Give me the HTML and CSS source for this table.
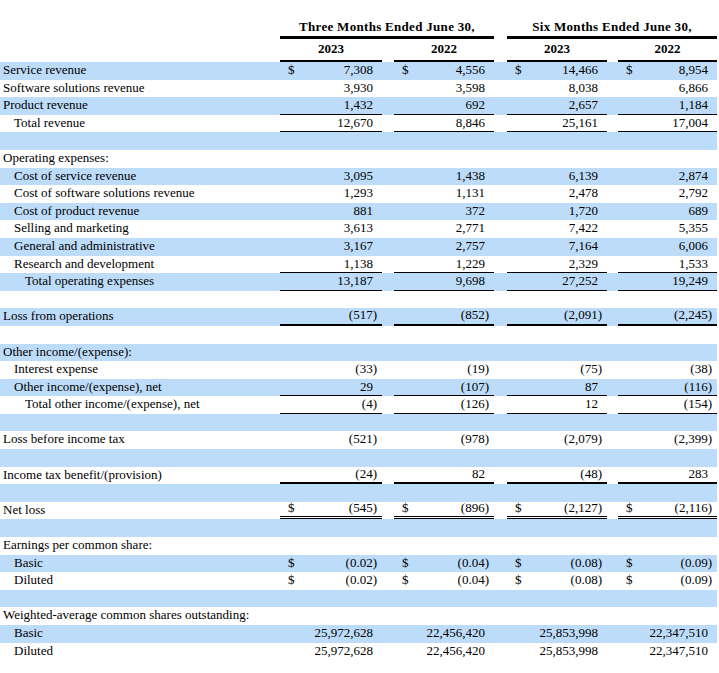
FILE: index.html
```html
<!DOCTYPE html>
<html lang="en">
<head>
<meta charset="utf-8">
<title>Statements of Operations</title>
<link rel="stylesheet" href="styles.css">
</head>
<body>
<div class="sheet">
  <div class="grid head1">
    <div class="grp g1">Three Months Ended June 30,</div>
    <div class="grp g2">Six Months Ended June 30,</div>
  </div>
  <div class="grid head2">
    <div class="yr c1">2023</div>
    <div class="yr c2">2022</div>
    <div class="yr c3">2023</div>
    <div class="yr c4">2022</div>
  </div>

  <div class="grid row b">
    <div class="lbl">Service revenue</div>
    <div class="v c1"><span>$</span><span>7,308</span></div>
    <div class="v c2"><span>$</span><span>4,556</span></div>
    <div class="v c3"><span>$</span><span>14,466</span></div>
    <div class="v c4"><span>$</span><span>8,954</span></div>
  </div>
  <div class="grid row">
    <div class="lbl">Software solutions revenue</div>
    <div class="v c1"><span>3,930</span></div>
    <div class="v c2"><span>3,598</span></div>
    <div class="v c3"><span>8,038</span></div>
    <div class="v c4"><span>6,866</span></div>
  </div>
  <div class="grid row b">
    <div class="lbl">Product revenue</div>
    <div class="v c1 u1"><span>1,432</span></div>
    <div class="v c2 u1"><span>692</span></div>
    <div class="v c3 u1"><span>2,657</span></div>
    <div class="v c4 u1"><span>1,184</span></div>
  </div>
  <div class="grid row">
    <div class="lbl i1">Total revenue</div>
    <div class="v c1 u1"><span>12,670</span></div>
    <div class="v c2 u1"><span>8,846</span></div>
    <div class="v c3 u1"><span>25,161</span></div>
    <div class="v c4 u1"><span>17,004</span></div>
  </div>
  <div class="grid row b"></div>
  <div class="grid row">
    <div class="lbl">Operating expenses:</div>
  </div>
  <div class="grid row b">
    <div class="lbl i1">Cost of service revenue</div>
    <div class="v c1"><span>3,095</span></div>
    <div class="v c2"><span>1,438</span></div>
    <div class="v c3"><span>6,139</span></div>
    <div class="v c4"><span>2,874</span></div>
  </div>
  <div class="grid row">
    <div class="lbl i1">Cost of software solutions revenue</div>
    <div class="v c1"><span>1,293</span></div>
    <div class="v c2"><span>1,131</span></div>
    <div class="v c3"><span>2,478</span></div>
    <div class="v c4"><span>2,792</span></div>
  </div>
  <div class="grid row b">
    <div class="lbl i1">Cost of product revenue</div>
    <div class="v c1"><span>881</span></div>
    <div class="v c2"><span>372</span></div>
    <div class="v c3"><span>1,720</span></div>
    <div class="v c4"><span>689</span></div>
  </div>
  <div class="grid row">
    <div class="lbl i1">Selling and marketing</div>
    <div class="v c1"><span>3,613</span></div>
    <div class="v c2"><span>2,771</span></div>
    <div class="v c3"><span>7,422</span></div>
    <div class="v c4"><span>5,355</span></div>
  </div>
  <div class="grid row b">
    <div class="lbl i1">General and administrative</div>
    <div class="v c1"><span>3,167</span></div>
    <div class="v c2"><span>2,757</span></div>
    <div class="v c3"><span>7,164</span></div>
    <div class="v c4"><span>6,006</span></div>
  </div>
  <div class="grid row">
    <div class="lbl i1">Research and development</div>
    <div class="v c1 u1"><span>1,138</span></div>
    <div class="v c2 u1"><span>1,229</span></div>
    <div class="v c3 u1"><span>2,329</span></div>
    <div class="v c4 u1"><span>1,533</span></div>
  </div>
  <div class="grid row b">
    <div class="lbl i2">Total operating expenses</div>
    <div class="v c1 u1"><span>13,187</span></div>
    <div class="v c2 u1"><span>9,698</span></div>
    <div class="v c3 u1"><span>27,252</span></div>
    <div class="v c4 u1"><span>19,249</span></div>
  </div>
  <div class="grid row"></div>
  <div class="grid row b">
    <div class="lbl">Loss from operations</div>
    <div class="v c1 n u2"><span>(517)</span></div>
    <div class="v c2 n u2"><span>(852)</span></div>
    <div class="v c3 n u2"><span>(2,091)</span></div>
    <div class="v c4 n u2"><span>(2,245)</span></div>
  </div>
  <div class="grid row"></div>
  <div class="grid row b">
    <div class="lbl">Other income/(expense):</div>
  </div>
  <div class="grid row">
    <div class="lbl i1">Interest expense</div>
    <div class="v c1 n"><span>(33)</span></div>
    <div class="v c2 n"><span>(19)</span></div>
    <div class="v c3 n"><span>(75)</span></div>
    <div class="v c4 n"><span>(38)</span></div>
  </div>
  <div class="grid row b">
    <div class="lbl i1">Other income/(expense), net</div>
    <div class="v c1 u1"><span>29</span></div>
    <div class="v c2 n u1"><span>(107)</span></div>
    <div class="v c3 u1"><span>87</span></div>
    <div class="v c4 n u1"><span>(116)</span></div>
  </div>
  <div class="grid row">
    <div class="lbl i2">Total other income/(expense), net</div>
    <div class="v c1 n u1"><span>(4)</span></div>
    <div class="v c2 n u1"><span>(126)</span></div>
    <div class="v c3 u1"><span>12</span></div>
    <div class="v c4 n u1"><span>(154)</span></div>
  </div>
  <div class="grid row b"></div>
  <div class="grid row">
    <div class="lbl">Loss before income tax</div>
    <div class="v c1 n"><span>(521)</span></div>
    <div class="v c2 n"><span>(978)</span></div>
    <div class="v c3 n"><span>(2,079)</span></div>
    <div class="v c4 n"><span>(2,399)</span></div>
  </div>
  <div class="grid row b"></div>
  <div class="grid row">
    <div class="lbl">Income tax benefit/(provision)</div>
    <div class="v c1 n u2"><span>(24)</span></div>
    <div class="v c2 u2"><span>82</span></div>
    <div class="v c3 n u2"><span>(48)</span></div>
    <div class="v c4 u2"><span>283</span></div>
  </div>
  <div class="grid row b"></div>
  <div class="grid row">
    <div class="lbl">Net loss</div>
    <div class="v c1 n ud"><span>$</span><span>(545)</span></div>
    <div class="v c2 n ud"><span>$</span><span>(896)</span></div>
    <div class="v c3 n ud"><span>$</span><span>(2,127)</span></div>
    <div class="v c4 n ud"><span>$</span><span>(2,116)</span></div>
  </div>
  <div class="grid row b"></div>
  <div class="grid row">
    <div class="lbl">Earnings per common share:</div>
  </div>
  <div class="grid row b">
    <div class="lbl i1">Basic</div>
    <div class="v c1 n"><span>$</span><span>(0.02)</span></div>
    <div class="v c2 n"><span>$</span><span>(0.04)</span></div>
    <div class="v c3 n"><span>$</span><span>(0.08)</span></div>
    <div class="v c4 n"><span>$</span><span>(0.09)</span></div>
  </div>
  <div class="grid row">
    <div class="lbl i1">Diluted</div>
    <div class="v c1 n"><span>$</span><span>(0.02)</span></div>
    <div class="v c2 n"><span>$</span><span>(0.04)</span></div>
    <div class="v c3 n"><span>$</span><span>(0.08)</span></div>
    <div class="v c4 n"><span>$</span><span>(0.09)</span></div>
  </div>
  <div class="grid row b"></div>
  <div class="grid row">
    <div class="lbl">Weighted-average common shares outstanding:</div>
  </div>
  <div class="grid row b">
    <div class="lbl i1">Basic</div>
    <div class="v c1"><span>25,972,628</span></div>
    <div class="v c2"><span>22,456,420</span></div>
    <div class="v c3"><span>25,853,998</span></div>
    <div class="v c4"><span>22,347,510</span></div>
  </div>
  <div class="grid row">
    <div class="lbl i1">Diluted</div>
    <div class="v c1"><span>25,972,628</span></div>
    <div class="v c2"><span>22,456,420</span></div>
    <div class="v c3"><span>25,853,998</span></div>
    <div class="v c4"><span>22,347,510</span></div>
  </div>
</div>
</body>
</html>
```

FILE: styles.css
```css
html, body {
  margin: 0;
  padding: 0;
  background: #ffffff;
}

body {
  font-family: "Liberation Serif", "Times New Roman", serif;
  font-size: 13px;
  color: #000000;
}

.sheet {
  width: 717px;
  padding-top: 18px;
}

.grid {
  display: grid;
  grid-template-columns: 280px 102px 12px 100px 13px 100px 11px 99px;
}

.head1 {
  height: 18px;
  font-weight: bold;
}

.grp {
  display: flex;
  align-items: center;
  justify-content: center;
  border-bottom: 3px solid #000;
  height: 18px;
  letter-spacing: 0.3px;
}

.g1 { grid-column: 2 / 5; }
.g2 { grid-column: 6 / 9; }

.head2 {
  height: 23px;
  margin-top: 3px;
  font-weight: bold;
}

.yr {
  display: flex;
  align-items: center;
  justify-content: center;
  border-bottom: 2px solid #000;
  box-sizing: border-box;
  height: 23px;
  padding-bottom: 1px;
}

.row {
  height: 17.6px;
  line-height: 15.5px;
}

.row.b {
  background: #bddcf9;
}

.lbl {
  grid-column: 1;
  padding-left: 3px;
  white-space: nowrap;
}

.lbl.i1 { padding-left: 14px; }
.lbl.i2 { padding-left: 25px; }

.c1 { grid-column: 2; }
.c2 { grid-column: 4; }
.c3 { grid-column: 6; }
.c4 { grid-column: 8; }

.v {
  display: flex;
  justify-content: space-between;
  box-sizing: border-box;
  height: 17.6px;
  padding: 0 9px 0 8px;
  white-space: nowrap;
}

.v span:only-child {
  margin-left: auto;
}

.v.n {
  padding-right: 5px;
}

.u1 { box-shadow: inset 0 -1px 0 #000; }
.u2 { box-shadow: inset 0 -2px 0 #000; line-height: 14px; }
.ud { box-shadow: inset 0 -1px 0 #000, inset 0 -2px 0 #fff, inset 0 -3px 0 #000; line-height: 12px; }
```
